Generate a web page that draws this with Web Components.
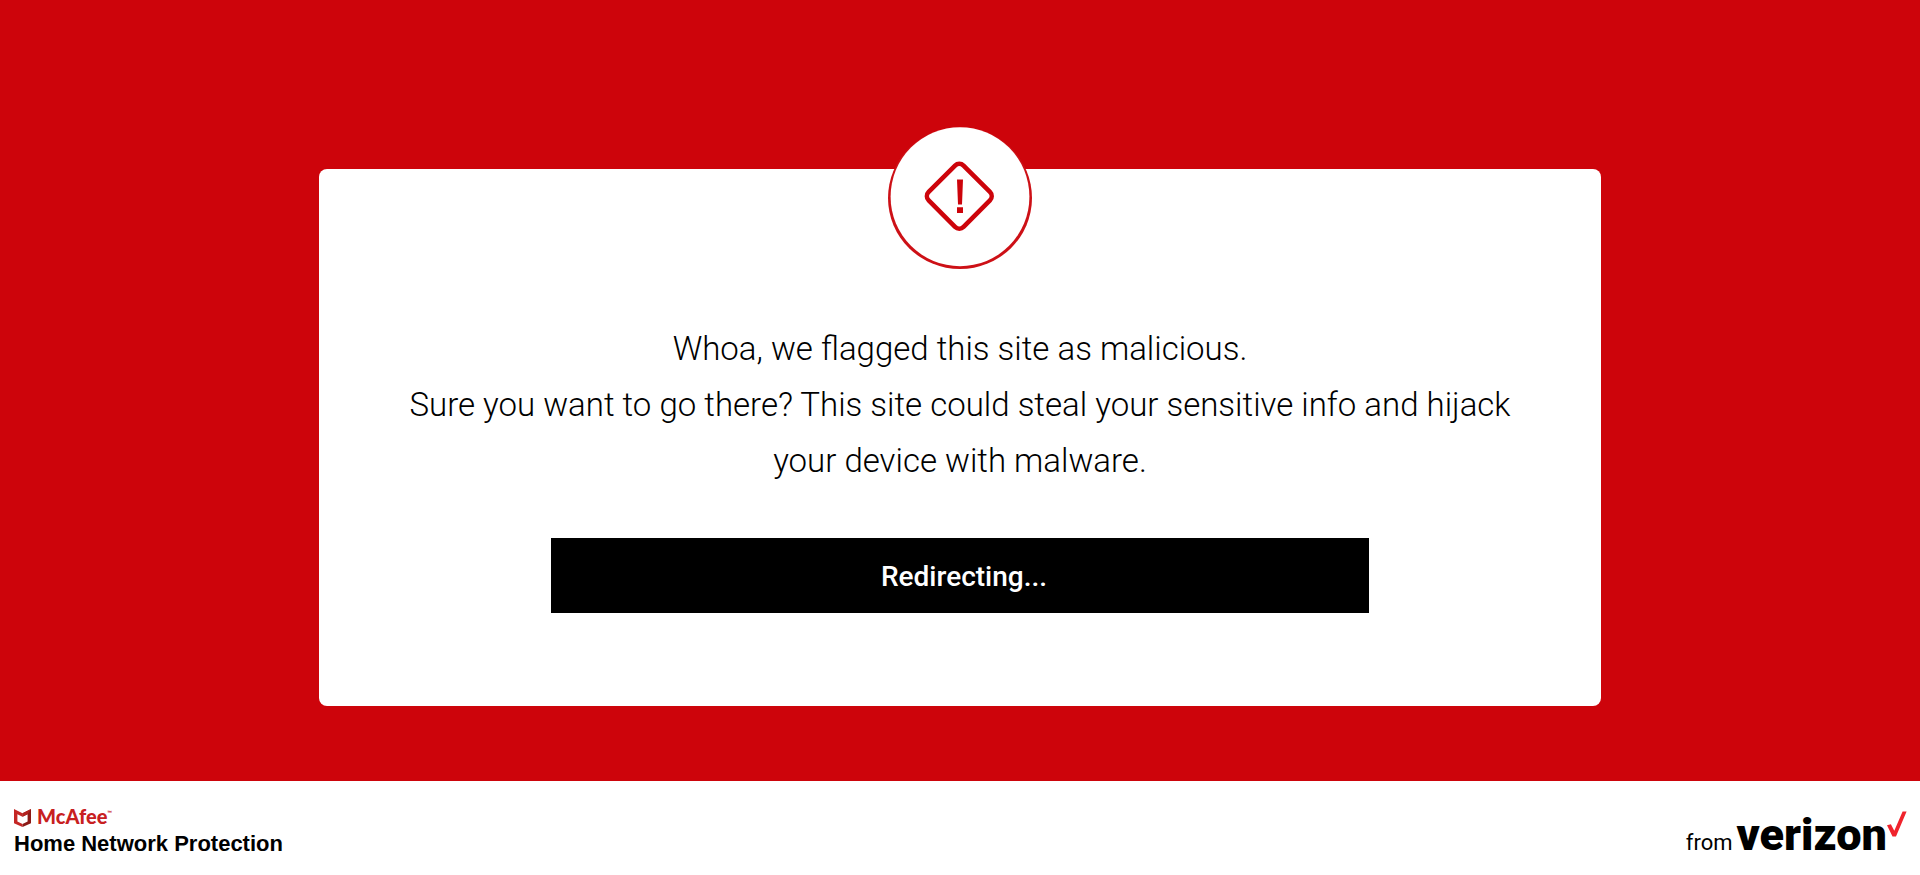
<!DOCTYPE html>
<html lang="en">
<head>
<meta charset="utf-8">
<meta name="viewport" content="width=device-width, initial-scale=1">
<title>Site flagged as malicious</title>
<style>
  body { margin: 0; font-family: Roboto, "Liberation Sans", sans-serif; color: #000; background: #fff; }
</style>
</head>
<body>
<warning-page>
  <warning-card>
    <warning-badge slot="badge"></warning-badge>
    Whoa, we flagged this site as malicious.<br>Sure you want to go there? This site could steal your sensitive info and hijack your device with malware.
    <action-button slot="action">Redirecting...</action-button>
  </warning-card>
  <brand-footer slot="footer">
    <mcafee-logo slot="start">Home Network Protection</mcafee-logo>
    <verizon-logo slot="end"></verizon-logo>
  </brand-footer>
</warning-page>
<script>
const define = (name, html) => {
  const template = document.createElement('template');
  template.innerHTML = html;
  customElements.define(name, class extends HTMLElement {
    constructor() {
      super();
      this.attachShadow({ mode: 'open' }).append(template.content.cloneNode(true));
    }
  });
};

define('warning-page', `
  <style>
    :host { display: flex; flex-direction: column; min-height: 100vh; background: #cd040b; }
    main { flex: 1; display: flex; flex-direction: column; align-items: center; padding: 169px 0 75px; }
  </style>
  <main><slot></slot></main>
  <slot name="footer"></slot>`);

define('warning-card', `
  <style>
    :host { display: block; position: relative; width: calc(66.667% + 2px); background: #fff; border-radius: 8px; }
    section { display: flex; flex-direction: column; align-items: center; gap: 49px; padding: 152px 0 93px; }
    p { margin: 0; padding: 0 60px; font-size: 33px; line-height: 56px; font-weight: 300; text-align: center; }
    .badge { position: absolute; top: -42px; left: 0; right: 0; display: flex; justify-content: center; }
    .action { width: 63.8%; }
  </style>
  <div class="badge"><slot name="badge"></slot></div>
  <section>
    <p><slot></slot></p>
    <div class="action"><slot name="action"></slot></div>
  </section>`);

define('warning-badge', `
  <style>
    :host { display: block; }
    svg { display: block; }
  </style>
  <svg width="144" height="142" viewBox="0 0 144 142" role="img" aria-label="Warning">
    <ellipse cx="72" cy="71" rx="72" ry="71" fill="#cd1016"/>
    <ellipse cx="72" cy="69.700" rx="69.400" ry="69.500" fill="#fff"/>
    <rect x="46.65" y="44.55" width="49.3" height="49.3" rx="6" transform="rotate(45 71.3 69.2)" fill="none" stroke="#cd040b" stroke-width="4.6"/>
    <path d="M69 52.4h6l-1 25.2h-4zM69 80.2h6v5.8h-6z" fill="#cd040b"/>
  </svg>`);

define('action-button', `
  <style>
    :host { display: block; }
    button { display: block; width: 100%; margin: 0; border: 0; border-radius: 0; padding: 2px 0 0 8px; height: 75px;
      background: #000; color: #fff; font: 500 28px/36px Roboto, "Liberation Sans", sans-serif; text-align: center; }
  </style>
  <button type="button"><slot></slot></button>`);

define('brand-footer', `
  <style>
    :host { display: block; background: #fff; }
    footer { display: flex; justify-content: space-between; align-items: flex-start; padding: 24px 13px 16px 14px; }
  </style>
  <footer><slot name="start"></slot><slot name="end"></slot></footer>`);

define('mcafee-logo', `
  <style>
    :host { display: flex; flex-direction: column; gap: 3px; }
    .brand { display: flex; align-items: flex-start; gap: 6px; font: 900 20px/22px Lato, sans-serif; color: #c8201f; }
    svg { display: block; padding-top: 4px; }
    small { font-size: 6px; line-height: 8px; vertical-align: top; position: relative; top: 4px; }
    .product { font: 700 22px/28px "Liberation Sans", Arial, sans-serif; }
  </style>
  <div class="brand">
    <svg width="17" height="18" viewBox="0 0 17 18" aria-hidden="true">
      <path d="M0 0l8.500 4.200v3.600L3.400 5.200v7.400l5.100 2.400v3L0 14.200z" fill="#c42624"/>
      <path d="M17 0L8.500 4.200v3.600l5.100-2.600v7.400L8.500 15v3l8.500-3.800z" fill="#8c1a16"/>
      <path d="M17 0L8.500 4.200v3.600l5.100-2.600z" fill="#b3211e"/>
    </svg>
    <span>McAfee<small>™</small></span>
  </div>
  <div class="product"><slot></slot></div>`);

define('verizon-logo', `
  <style>
    :host { display: flex; align-items: baseline; gap: 4px; padding-top: 6px; }
    .from { font-size: 22px; line-height: 48px; }
    .brand { display: flex; align-items: flex-start; font-size: 45px; line-height: 48px; font-weight: 900; }
    svg { display: block; }
  </style>
  <span class="from">from</span>
  <span class="brand">verizon<svg width="20" height="26" viewBox="0 0 20 26" aria-hidden="true">
    <path d="M0 14.200L3.900 13.200 7.300 19.800 15.600.500h4L9 25.500H5.500z" fill="#f0232c"/>
  </svg></span>`);
</script>
</body>
</html>
